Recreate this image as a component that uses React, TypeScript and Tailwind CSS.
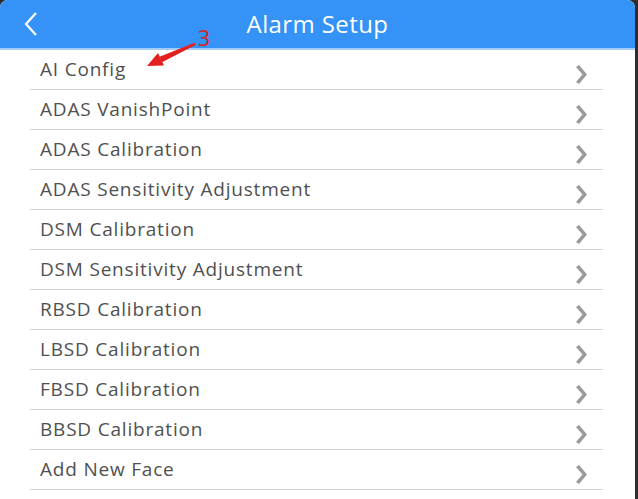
const items = [
  'AI Config',
  'ADAS VanishPoint',
  'ADAS Calibration',
  'ADAS Sensitivity Adjustment',
  'DSM Calibration',
  'DSM Sensitivity Adjustment',
  'RBSD Calibration',
  'LBSD Calibration',
  'FBSD Calibration',
  'BBSD Calibration',
  'Add New Face',
];

const Chevron = () => (
  <svg width="13" height="19" viewBox="0 0 13 19" className="shrink-0">
    <path d="M1 2 L4 0 L12 9.5 L4 19 L1 17 L7.5 9.5 Z" fill="#9a9a9a" />
  </svg>
);

export default function App() {
  return (
    <div className="flex h-[499px] w-[638px] bg-[#2d2d2d]" style={{ fontFamily: '"Open Sans", "Noto Sans", sans-serif' }}>
      <div className="relative flex h-full w-[635px] flex-col overflow-hidden rounded-t-[8px] bg-white">
        {/* header */}
        <div className="flex h-[50px] shrink-0 items-center border-b-2 border-[#a3cdf8] bg-[#3592f6] px-6">
          <svg width="14" height="24" viewBox="0 0 14 24" fill="none" className="shrink-0">
            <path d="M12 1 L2 12 L12 23" stroke="white" strokeWidth="2.2" />
          </svg>
          <div className="flex-1 pr-[14px] text-center text-[24px] tracking-[0.4px] text-white">Alarm Setup</div>
        </div>

        {/* list */}
        <div className="flex flex-col pl-[30px] pr-[32px]">
          {items.map((label) => (
            <div
              key={label}
              className="flex h-[40px] items-center justify-between border-b border-[#d4d4d4] pl-[10px] pr-[15px]"
            >
              <span className="text-[19px] tracking-[0.8px] text-[#505050]">{label}</span>
              <div className="pt-[9px]">
                <Chevron />
              </div>
            </div>
          ))}
        </div>

        {/* annotation */}
        <div className="absolute left-[140px] top-[30px] h-[45px] w-[80px]">
          <svg width="80" height="45" viewBox="0 0 80 45">
            <path d="M55.5 15 L54.5 12.8 L19.5 26.8 L22 32.2 Z" fill="#e32020" />
            <path d="M7 36 L18 23 L24 35.5 Z" fill="#e32020" />
          </svg>
          <span className="absolute left-[58px] top-[-2px] text-[21px] leading-none text-[#d82020]">3</span>
        </div>
      </div>
    </div>
  );
}
